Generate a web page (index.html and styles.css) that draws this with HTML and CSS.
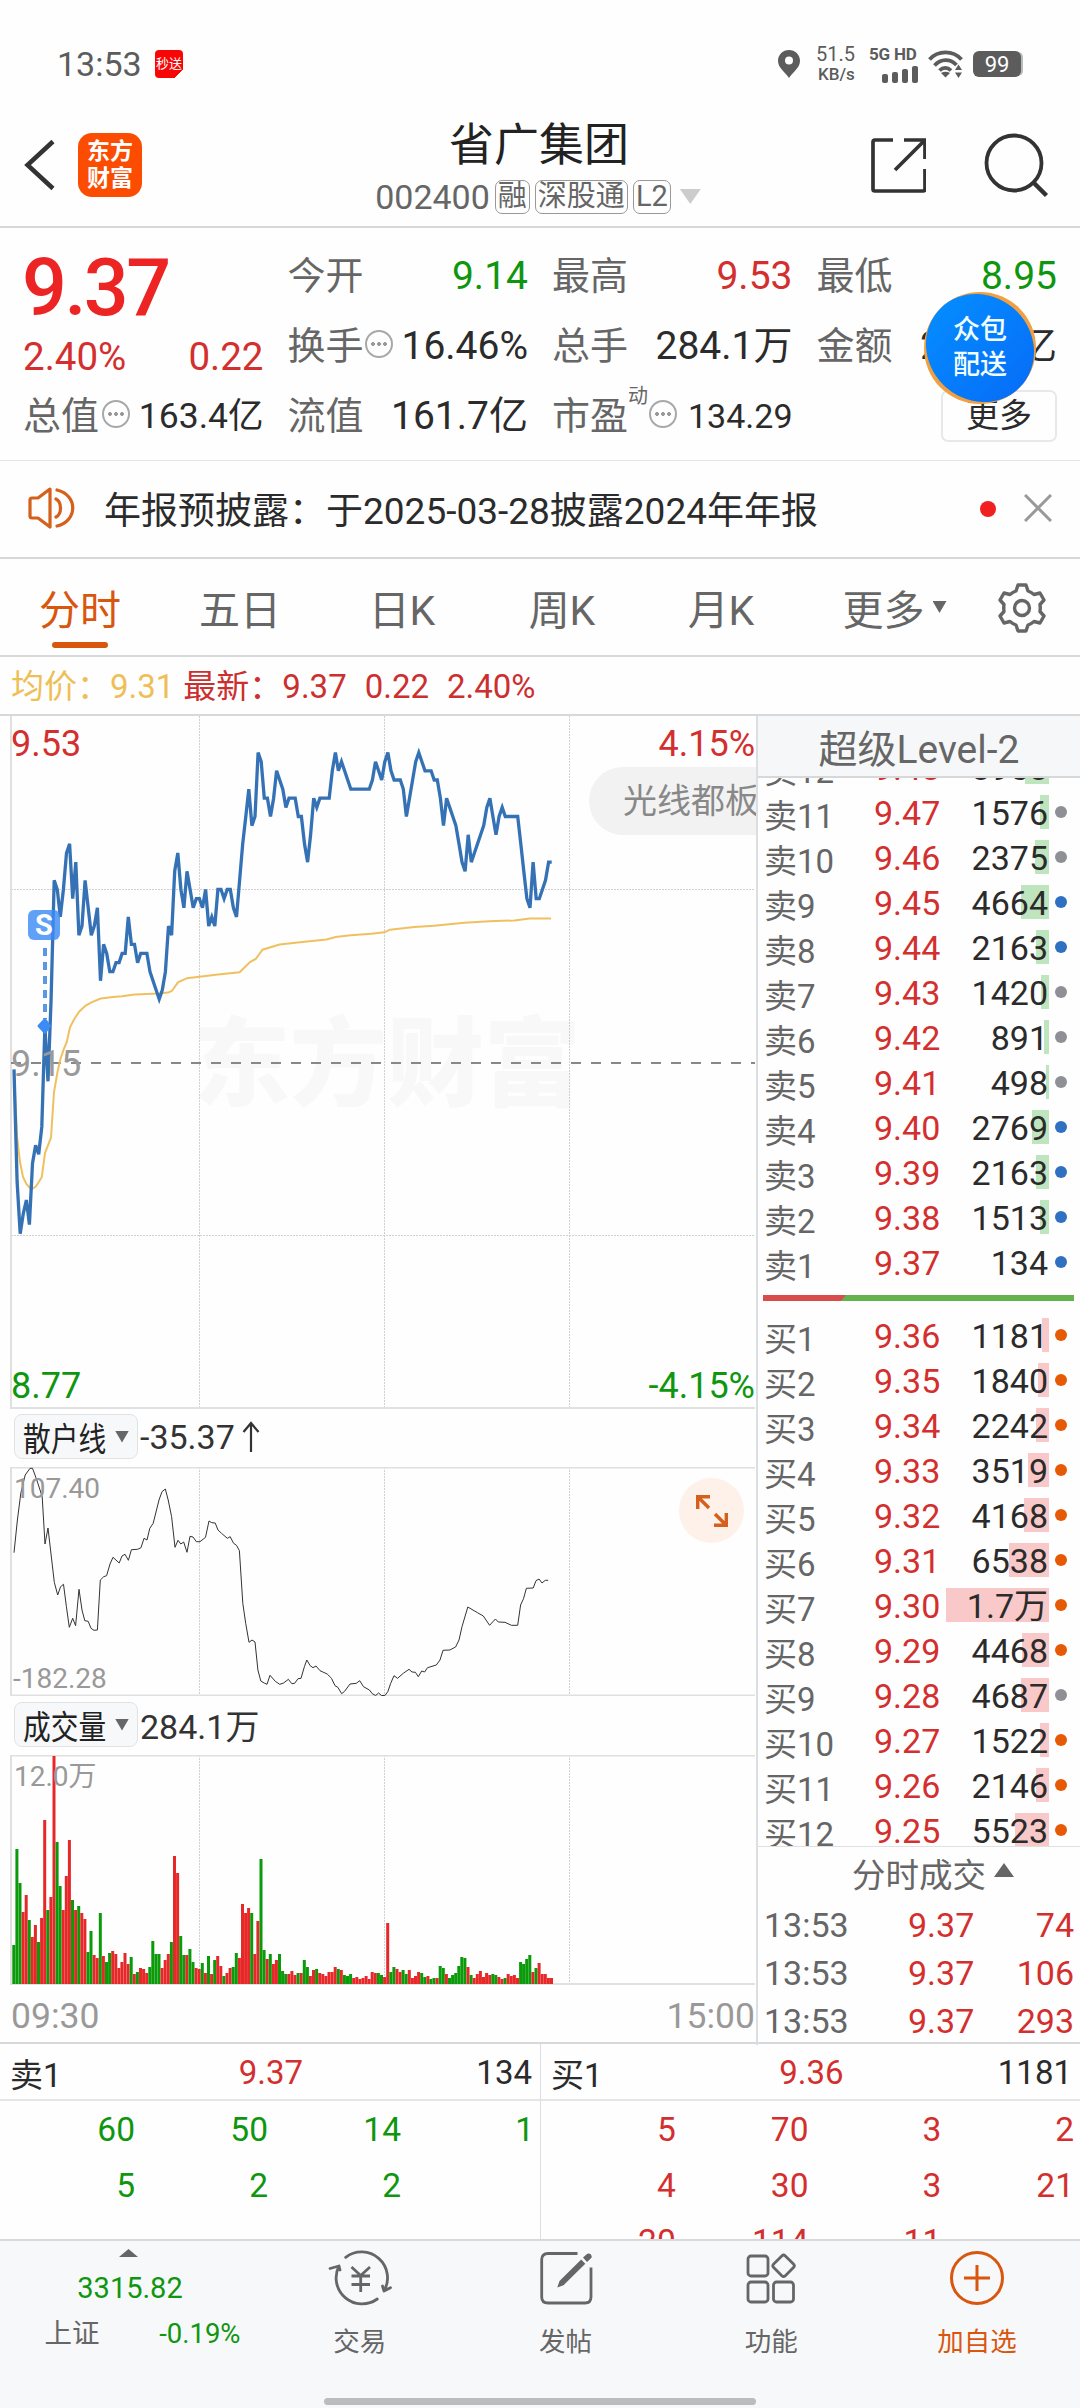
FILE: index.html
```html
<!DOCTYPE html>
<html lang="zh-CN">
<head>
  <meta charset="UTF-8" />
  <meta name="viewport" content="width=device-width, initial-scale=1.0" />
  <title>省广集团 002400</title>
  <link rel="stylesheet" href="styles.css">
</head>
<body>
  <div class="phone">
    <div class="status-bar">
      <span class="clock">13:53</span>
      <span class="app-badge">秒送</span>
      <div class="status-icons">
        <svg class="pin" width="22" height="28" viewBox="0 0 22 28"><path d="M11 0C5 0 0 4.700 0 10.800C0 18 7 22 11 28C15 22 22 18 22 10.800C22 4.700 17 0 11 0ZM11 6.500A4 4 0 1 1 11 14.500A4 4 0 0 1 11 6.500Z" fill="#5c5c5c" fill-rule="evenodd"/></svg>
        <div class="net-speed"><span>51.5</span><span>KB/s</span></div>
        <div class="signal">
          <span>5G HD</span>
          <svg width="36" height="17" viewBox="0 0 36 17" fill="#5c5c5c"><rect x="0" y="8" width="6" height="9" rx="2"/><rect x="10" y="6" width="6" height="11" rx="2"/><rect x="20" y="3" width="6" height="14" rx="2"/><rect x="30" y="0" width="6" height="17" rx="2"/></svg>
        </div>
        <svg class="wifi" width="36" height="28" viewBox="0 0 36 28" fill="none" stroke="#5c5c5c" stroke-width="3.800"><path d="M1.500 9.500C10 0 25 0 33.500 9.500"/><path d="M6.500 15.500C13 8.500 22 8.500 28.500 15"/><path d="M11.500 20.500C15 17 19.500 17 23 20.500"/><path d="M13 23L17.500 27.500L22 23Q17.500 20.500 13 23Z" fill="#5c5c5c" stroke="none"/><path d="M27 20L30.500 14.500L34 20ZM27 22.500L30.500 28L34 22.500Z" fill="#5c5c5c" stroke="none"/></svg>
        <div class="battery">99</div>
      </div>
    </div>

    <header class="header">
      <svg class="back" width="32" height="52" viewBox="0 0 32 52" fill="none" stroke="#333" stroke-width="4.500"><path d="M29 2.500L3.500 26L29 49.500"/></svg>
      <div class="logo"><span>东方</span><span>财富</span></div>
      <div class="title">
        <h1>省广集团</h1>
        <div class="code">
          <span>002400</span>
          <span class="tag">融</span>
          <span class="tag">深股通</span>
          <span class="tag">L2</span>
          <i class="caret"></i>
        </div>
      </div>
      <svg class="share" width="56" height="56" viewBox="0 0 56 56" fill="none" stroke="#333" stroke-width="3.700"><path d="M23 3H5Q3 3 3 5V52Q3 54 5 54H53Q55 54 55 52V32"/><path d="M34 3H55V22M54 4L25 33"/></svg>
      <svg class="search" width="66" height="66" viewBox="0 0 66 66" fill="none" stroke="#333" stroke-width="3.800"><circle cx="30" cy="31" r="27.500"/><path d="M49.500 50.500L62.500 63.500" stroke-width="4.500"/></svg>
    </header>

    <section class="quote">
      <div class="price-cell">
        <b>9.37</b>
        <div class="change"><span>2.40%</span><span>0.22</span></div>
      </div>
      <div class="cell"><label>今开</label><span class="green">9.14</span></div>
      <div class="cell"><label>最高</label><span class="red">9.53</span></div>
      <div class="cell"><label>最低</label><span class="green">8.95</span></div>
      <div class="cell"><label>换手</label><i class="more-dot"></i><span>16.46%</span></div>
      <div class="cell"><label>总手</label><span>284.1万</span></div>
      <div class="cell"><label>金额</label><span>26.45亿</span></div>
      <div class="cell"><label>总值</label><i class="more-dot gap"></i><span class="small">163.4亿</span></div>
      <div class="cell"><label>流值</label><span>161.7亿</span></div>
      <div class="cell"><label>市盈</label><sup>动</sup><i class="more-dot"></i><span class="mid">134.29</span></div>
      <div class="cell"><button class="more-btn">更多</button></div>
      <div class="float-badge"><span>众包</span><span>配送</span></div>
    </section>

    <section class="notice">
      <svg width="48" height="42" viewBox="0 0 48 42" fill="none" stroke="#d4601c" stroke-width="3.200" stroke-linejoin="round"><path d="M22 2L10 11H4Q2 11 2 13V29Q2 31 4 31H10L22 40Z"/><path d="M28 12C34 15 34 27 28 30" stroke-linecap="round"/><path d="M29 3C50 8 50 34 29 39" stroke-linecap="round"/></svg>
      <p>年报预披露：于2025-03-28披露2024年年报</p>
      <i class="red-dot"></i>
      <svg width="28" height="28" viewBox="0 0 28 28" stroke="#999" stroke-width="3"><path d="M1 1L27 27M27 1L1 27"/></svg>
    </section>

    <nav class="tabs">
      <a class="active">分时</a>
      <a>五日</a>
      <a>日K</a>
      <a>周K</a>
      <a>月K</a>
      <a class="tab-more">更多<i class="caret"></i></a>
      <a><svg width="48" height="50" viewBox="0 0 48 50" fill="none" stroke="#666" stroke-width="3.400" stroke-linejoin="round"><path d="M20 2H28L30 8Q33 9 36 11.500L42 10L46 17L42 21.500Q42.500 25 42 28.500L46 33L42 40L36 38.500Q33 41 30 42L28 48H20L18 42Q15 41 12 38.500L6 40L2 33L6 28.500Q5.500 25 6 21.500L2 17L6 10L12 11.500Q15 9 18 8Z"/><circle cx="24" cy="25" r="7.500"/></svg></a>
    </nav>

    <div class="latest">
      <span class="avg">均价：9.31</span>
      <span>最新：9.37</span>
      <span>0.22</span>
      <span>2.40%</span>
    </div>

    <main class="main">
      <div class="charts">
        <svg class="chart" width="756" height="693" viewBox="0 0 756 693">
          <text class="watermark" x="193" y="382">东方财富</text>
          <g class="grid">
            <path d="M199.500 0V692M384.500 0V692M569.500 0V692M11 173.500H755M11 519.500H755"/>
          </g>
          <path class="frame" d="M11 0V692H755"/>
          <path d="M11 347H755" stroke="#888" stroke-width="2" stroke-dasharray="10 10"/>
          <text class="label red" x="11" y="40">9.53</text>
          <text class="label red end" x="755" y="40">4.15%</text>
          <text class="label green" x="11" y="682">8.77</text>
          <text class="label green end" x="755" y="682">-4.15%</text>
          <polyline class="avg-line" points="14,354 17,420 20,446 23,461 26.400,468 31.400,473.500 35.700,470.500 39,465.700 41.800,461 45,437 51,421.700 54,376 57.500,356 60.400,343 63.600,333.600 66.800,326 70,311.400 74.300,303 79.300,295.500 85.700,289.600 91.400,286.300 100.700,282.600 113,281 122,280.300 134.600,278.500 159.300,277.400 168,276.600 171.800,275 178,266.300 187,262.200 199.300,260.700 218,258.500 239.600,256.300 250,246 255.700,243 262.500,233.700 279.600,228.500 300,226.300 326.400,223.400 335.700,221 350.700,219.300 371.400,217.800 384.300,216.300 390,213.700 414.300,211 434,209.700 464.300,206.700 489.300,205.200 514.300,204.500 529.600,202.600 551,202.600"/>
          <polyline class="price-line" id="priceLine"/>
          <text class="label gray" x="11" y="360">9.15</text>
          <path d="M45 232V303" stroke="#5a98e2" stroke-width="4" stroke-dasharray="8 6"/>
          <path d="M45 303L50 310L45 317L38.500 310Z" fill="#3d8bf5" stroke="#3d8bf5" stroke-width="2" stroke-linejoin="round"/>
          <rect x="28" y="194" width="32" height="30" rx="6" fill="#3d8bf5" fill-opacity="0.820"/>
          <text class="sell-mark" x="44" y="219">S</text>
          <path d="M756 51H623A34 34 0 0 0 623 119H756Z" fill="#f2f2f2"/>
          <text class="topic" x="623" y="97">光线都板块</text>
        </svg>

        <div class="indicator">
          <div class="picker"><span>散户线</span><i class="caret"></i></div>
          <span>-35.37</span>
          <svg width="18" height="32" viewBox="0 0 18 32" fill="none" stroke="#333" stroke-width="2.200"><path d="M9 31V2M1.500 11L9 2L16.500 11"/></svg>
        </div>
        <div class="sub-chart">
          <svg width="756" height="229" viewBox="0 0 756 229">
            <path class="grid" d="M199.500 0V229M384.500 0V229M569.500 0V229"/>
            <path class="frame" d="M755 0.500H11V228.500H755"/>
            <polyline class="retail-line" points="14,85.700 17.400,53 20.800,26.300 25.200,8 30,1.300 32.500,1.300 36.800,13 42.200,29.700 45,77 48,61 54.300,115.300 57.700,128 60.600,119.700 63.500,117.300 66.400,139.700 69.300,160.300 72.700,151.300 75.600,158.700 79,122.300 82,143 84.800,153.700 88.200,154.300 91,161.300 94,163.300 97.400,163 100.300,113 103.700,109.700 106.600,108.700 110,97 113,90.300 119.200,96 122,89 125,87.300 128.400,93.300 131.400,82.700 137.700,82.300 141,80.700 144,71.300 147,73 149.800,61.300 153.200,56.300 159,33 162,24.700 165.300,22 168.200,33 171.600,49.700 175,80.300 178,73.300 180.800,77 183.700,75 187,85.300 190,69.300 193,70 196.300,74.700 200,74.700 205.500,70.300 209,54 211.800,55.700 215.200,56 218,63 221.500,66.300 227.300,71.300 230.200,69.700 233.600,76.300 236.500,78.300 239.400,83.700 242.800,136.300 245.700,156.300 249,175.300 252,173 255,175 257.900,203 260.800,214 264.200,216 267,217.300 270,208.300 275.300,214.300 279.700,217.300 283.600,216 288.400,212.300 291.800,216.700 294.700,216.300 298,211.700 301,211.300 304.400,199.700 306.800,193 310.200,198.700 313,200.700 316,199 320,203.700 327.200,207 331.500,211.300 335,218.700 337.800,220.300 341.700,226.700 344.600,224.300 350,217 356.300,216.300 359.700,213.700 363.500,219.700 369.400,223 372.300,226.700 375.700,228.500 378.600,226 381.500,228.500 384.900,228.500 387.800,224.700 390.700,216.300 394,208.700 397.500,211.300 403.300,206.300 409,202.300 412,205 415.400,205.300 418.300,209.700 421.700,204 424.600,205 427.500,200.700 436.300,198 440,193 443,183.300 449.800,183 455.600,180 459,173 462,159.700 467.800,140 477.500,145.700 483.300,149 489.600,158.300 495.400,152 498.300,155 505,155.300 511.400,158.300 517.700,158.300 520.600,138 523.500,131.700 526.400,121.300 533.200,121 536,113.700 539,112 542,116 545.300,113.300 548.200,113.300"/>
            <text class="small-label" x="14" y="31">107.40</text>
            <text class="small-label" x="13" y="221">-182.28</text>
          </svg>
          <button class="expand"><svg width="32" height="32" viewBox="0 0 32 32" fill="none" stroke="#d4601c" stroke-width="3.400"><path d="M1.700 14V1.700H14M1.700 1.700L13 13M18 30.300H30.300V18M30.300 30.300L19 19"/></svg></button>
        </div>

        <div class="indicator">
          <div class="picker"><span>成交量</span><i class="caret"></i></div>
          <span>284.1万</span>
        </div>
        <svg class="chart" width="756" height="230" viewBox="0 0 756 230">
          <path class="grid" d="M199.500 0V229M384.500 0V229M569.500 0V229"/>
          <path class="frame" d="M755 0.500H11V229H755"/>
          <g id="volumeBars"></g>
          <text class="small-label" x="14" y="31">12.0万</text>
        </svg>
        <div class="times"><span>09:30</span><span>15:00</span></div>
      </div>

      <aside class="depth">
        <h2>超级Level-2</h2>
        <div class="book">
          <div class="rows" id="sellRows"></div>
          <div class="ratio"><i></i></div>
          <div class="rows" id="buyRows"></div>
        </div>
        <div class="deals">
          <div class="deals-title">分时成交<i class="caret up"></i></div>
          <div class="deal"><span>13:53</span><b>9.37</b><em>74</em></div>
          <div class="deal"><span>13:53</span><b>9.37</b><em>106</em></div>
          <div class="deal"><span>13:53</span><b>9.37</b><em>293</em></div>
        </div>
      </aside>
    </main>

    <section class="queues">
      <div class="queue">
        <div class="queue-head"><span>卖1</span><b>9.37</b><span>134</span></div>
        <div class="orders green"><span>60</span><span>50</span><span>14</span><span>1</span><span>5</span><span>2</span><span>2</span></div>
      </div>
      <div class="queue">
        <div class="queue-head"><span>买1</span><b>9.36</b><span>1181</span></div>
        <div class="orders red"><span>5</span><span>70</span><span>3</span><span>2</span><span>4</span><span>30</span><span>3</span><span>21</span><span>20</span><span>114</span><span>11</span></div>
      </div>
    </section>

    <footer class="toolbar">
      <div class="index">
        <i class="caret up"></i>
        <b>3315.82</b>
        <div><span>上证</span><em>-0.19%</em></div>
      </div>
      <div class="tool">
        <svg width="64" height="56" viewBox="0 0 64 56" fill="none" stroke="#666" stroke-width="2.800" stroke-linecap="round" stroke-linejoin="round"><path d="M17.700 7.300A26 26 0 0 1 56 41L62.500 37.700M56 41L54.500 36"/><path d="M49.300 49A26 26 0 0 1 11 16L2 18.500M11 16L12 20"/><path d="M23.500 17L32.700 25.500L42 17M32.700 25.500V42M23.500 26H42M23.500 34.500H42" stroke-linecap="butt"/></svg>
        <span>交易</span>
      </div>
      <div class="tool">
        <svg width="54" height="56" viewBox="0 0 54 56" fill="none" stroke="#666" stroke-width="2.800"><path d="M38.500 3.500H9Q2.700 3.500 2.700 9.500V47Q2.700 53 9 53H46Q52 53 52 47V17.500"/><path d="M18.300 37.500L20.500 31L42.200 9.500L46.300 13.700L24.500 35.200ZM44 7.500L48 3.900Q50 2.800 52 4.500Q53.500 6.500 51.800 8.500L48 12Z" fill="#666" stroke="none"/></svg>
        <span>发帖</span>
      </div>
      <div class="tool">
        <svg width="52" height="56" viewBox="0 0 52 56" fill="none" stroke="#666" stroke-width="2.800"><rect x="3" y="6" width="20" height="20" rx="3"/><rect x="3" y="32" width="20" height="20" rx="3"/><rect x="28.500" y="32" width="20" height="20" rx="3"/><rect x="30.300" y="7.500" width="16.500" height="16.500" rx="2.500" transform="rotate(45 38.500 15.800)"/></svg>
        <span>功能</span>
      </div>
      <div class="tool add">
        <svg width="56" height="56" viewBox="0 0 56 56" fill="none" stroke="#d9560f" stroke-width="3"><circle cx="28" cy="28" r="25.500"/><path d="M28 15V41M15 28H41"/></svg>
        <span>加自选</span>
      </div>
      <i class="home-bar"></i>
    </footer>
  </div>

  <script>
    // one value per minute from 09:30
    const prices = [
      9.143, 9.02, 8.963, 8.985, 9.00, 8.973, 9.04, 9.06, 9.05, 9.08, 9.19, 9.13, 9.22, 9.35, 9.34, 9.31, 9.34, 9.38, 9.39, 9.33,
      9.37, 9.29, 9.30, 9.35, 9.32, 9.29, 9.30, 9.32, 9.24, 9.28, 9.27, 9.25, 9.25, 9.26, 9.26, 9.27, 9.27, 9.31, 9.28, 9.28,
      9.26, 9.27, 9.27, 9.27, 9.25, 9.24, 9.23, 9.22, 9.23, 9.25, 9.30, 9.29, 9.36, 9.38, 9.34, 9.32, 9.36, 9.34, 9.32, 9.33,
      9.33, 9.32, 9.34, 9.30, 9.31, 9.30, 9.34, 9.34, 9.33, 9.34, 9.34, 9.32, 9.31, 9.35, 9.39, 9.42, 9.45, 9.41, 9.42, 9.49,
      9.48, 9.44, 9.44, 9.42, 9.44, 9.47, 9.46, 9.45, 9.43, 9.44, 9.44, 9.44, 9.42, 9.42, 9.39, 9.37, 9.40, 9.44, 9.43, 9.44,
      9.44, 9.44, 9.44, 9.47, 9.49, 9.47, 9.48, 9.47, 9.46, 9.45, 9.45, 9.45, 9.45, 9.45, 9.45, 9.45, 9.46, 9.48, 9.47, 9.46,
      9.48, 9.49, 9.47, 9.46, 9.46, 9.46, 9.45, 9.42, 9.44, 9.46, 9.48, 9.49, 9.48, 9.47, 9.47, 9.47, 9.46, 9.46, 9.44, 9.41,
      9.44, 9.43, 9.42, 9.41, 9.39, 9.37, 9.36, 9.40, 9.37, 9.38, 9.39, 9.40, 9.41, 9.43, 9.44, 9.42, 9.40, 9.42, 9.43, 9.42,
      9.42, 9.42, 9.42, 9.42, 9.39, 9.36, 9.33, 9.32, 9.37, 9.33, 9.33, 9.34, 9.35, 9.37, 9.37
    ];
    const step = 3.09;
    document.getElementById('priceLine').setAttribute('points',
      prices.map((p, i) => `${(14 + i * step).toFixed(1)},${(347 - (p - 9.15) * 913).toFixed(1)}`).join(' '));

    // g = down minute, r = up minute
    const volumes = ('g39 g135 g101 r72 r89 g64 r47 r59 g42 r66 r164 g74 r87 r228 g142 g98 r74 r108 r144 g84 ' +
      'r74 g78 r71 r65 g32 g53 r29 r26 g71 r28 g22 g31 r33 r30 r16 r22 r31 r20 g27 r10 ' +
      'g12 r16 r15 r11 g17 g43 g30 g30 r16 r24 r30 g42 r128 r111 g48 g29 r29 g35 g22 r16 ' +
      'r15 g21 r11 g28 r10 g24 r28 r18 g8 r11 r16 g17 g31 r26 r80 r71 r76 g71 r30 r63 ' +
      'g125 g34 r25 g30 r20 r24 g30 g13 g10 r10 r13 r9 g11 r11 g24 g17 r8 r14 g15 r11 ' +
      'r10 r8 r12 r12 r17 g15 r14 g9 g8 g10 r6 r7 r5 r6 r8 r5 r12 r11 g11 g9 ' +
      'r7 r61 g12 g17 r15 r12 g14 g10 r14 r6 r8 r12 g11 g7 r8 g5 g6 r6 g18 g16 ' +
      'r10 g6 g9 g11 g18 g27 g26 r17 g9 r6 r10 r13 r7 r11 r9 g10 g9 r7 r5 g6 ' +
      'r10 r8 r9 r6 g22 g20 g25 g29 r12 g16 r21 r10 r10 r6 r6').split(' ');
    document.getElementById('volumeBars').innerHTML = volumes.map((v, i) => {
      const h = Number(v.slice(1));
      return `<rect x="${(12.3 + i * step).toFixed(1)}" y="${229 - h}" width="3" height="${h}" fill="${v[0] === 'g' ? '#0a9a0a' : '#e62828'}"/>`;
    }).join('');

    // level, price, volume, bar width, dot colour
    const sells = [
      ['卖12', '9.48', '3958', 24, 'grey'], ['卖11', '9.47', '1576', 9, 'grey'], ['卖10', '9.46', '2375', 14, 'grey'],
      ['卖9', '9.45', '4664', 28, 'blue'], ['卖8', '9.44', '2163', 13, 'blue'], ['卖7', '9.43', '1420', 8, 'grey'],
      ['卖6', '9.42', '891', 5, 'grey'], ['卖5', '9.41', '498', 3, 'grey'], ['卖4', '9.40', '2769', 17, 'blue'],
      ['卖3', '9.39', '2163', 13, 'blue'], ['卖2', '9.38', '1513', 9, 'blue'], ['卖1', '9.37', '134', 0, 'blue']
    ];
    const buys = [
      ['买1', '9.36', '1181', 7, 'orange'], ['买2', '9.35', '1840', 11, 'orange'], ['买3', '9.34', '2242', 13, 'orange'],
      ['买4', '9.33', '3519', 21, 'orange'], ['买5', '9.32', '4168', 25, 'orange'], ['买6', '9.31', '6538', 40, 'orange'],
      ['买7', '9.30', '1.7万', 103, 'orange'], ['买8', '9.29', '4468', 27, 'orange'], ['买9', '9.28', '4687', 28, 'grey'],
      ['买10', '9.27', '1522', 9, 'orange'], ['买11', '9.26', '2146', 13, 'orange'], ['买12', '9.25', '5523', 34, 'orange']
    ];
    function renderRows(id, rows, side) {
      document.getElementById(id).innerHTML = rows.map(([level, price, vol, width, dot]) => `<div class="row">
        <span class="level">${level}</span>
        <span class="row-price">${price}</span>
        <span class="vol"><i class="vol-bar ${side}" style="width:${width}px"></i><span>${vol}</span></span>
        <i class="dot ${dot}"></i>
      </div>`).join('');
    }
    renderRows('sellRows', sells, 'sell');
    renderRows('buyRows', buys, 'buy');
  </script>
</body>
</html>
```
FILE: styles.css
```css
* {
  box-sizing: border-box;
}
body {
  margin: 0;
  background: #fefefe;
  font-family: Roboto, "Noto Sans CJK SC", sans-serif;
  color: #2b2b2b;
}
.phone {
  width: 1080px;
  height: 2408px;
  overflow: hidden;
  display: flex;
  flex-direction: column;
}
h1, h2, p {
  margin: 0;
  font-weight: 400;
}
b, em, i {
  font-weight: 400;
  font-style: normal;
}
svg {
  display: block;
  flex: none;
}
.red {
  color: #d32f2f;
  fill: #d32f2f;
}
.green {
  color: #0f960f;
  fill: #0f960f;
}
.gray {
  fill: #999;
}
.caret {
  display: inline-block;
  width: 14px;
  height: 12px;
  background: #666;
  clip-path: polygon(0 0, 100% 0, 50% 100%);
}
.caret.up {
  clip-path: polygon(50% 0, 100% 100%, 0 100%);
}

/* status bar */
.status-bar {
  height: 100px;
  padding: 28px 59px 0 57px;
  display: flex;
  align-items: center;
  color: #5c5c5c;
  line-height: 1;
}
.clock {
  font-size: 34px;
  width: 98px;
}
.app-badge {
  width: 28px;
  height: 28px;
  border-radius: 4px;
  background: linear-gradient(135deg, #f80606 84%, #fff 84%);
  color: #fff;
  font-size: 13px;
  line-height: 27px;
  text-align: center;
}
.status-icons {
  margin-left: auto;
  display: flex;
  align-items: center;
}
.net-speed {
  width: 53px;
  margin-left: 16px;
  display: flex;
  flex-direction: column;
  gap: 2px;
  font-size: 20px;
  line-height: 18px;
}
.net-speed span:last-child {
  font-size: 17px;
  font-weight: 500;
  padding-left: 2px;
}
.signal {
  width: 59px;
  display: flex;
  flex-direction: column;
  gap: 4px;
  font-size: 17px;
  font-weight: 700;
  line-height: 16px;
}
.signal span {
  white-space: nowrap;
  letter-spacing: -0.2px;
}
.signal svg {
  margin-left: 13px;
}
.battery {
  width: 48px;
  height: 26px;
  margin-left: 9px;
  border-radius: 6px;
  background: #5c5c5c;
  color: #fff;
  font-size: 22px;
  line-height: 27px;
  text-align: center;
  box-shadow: 3px 0 0 -1px #bbb;
}

/* header */
.header {
  height: 128px;
  padding: 3px 30px 0 24px;
  display: grid;
  grid-template-columns: 54px 66px 1fr 114px 66px;
  align-items: center;
  border-bottom: 2px solid #d6d8da;
}
.logo {
  width: 64px;
  height: 64px;
  border-radius: 14px;
  background: #fc4c02;
  color: #fff;
  font-size: 23px;
  font-weight: 700;
  line-height: 27px;
  display: flex;
  flex-direction: column;
  align-items: center;
  justify-content: center;
}
.title {
  text-align: center;
  padding-top: 4px;
  padding-left: 48px;
}
.title h1 {
  font-size: 45px;
  line-height: 60px;
  color: #222;
  padding-left: 16px;
}
.code {
  display: flex;
  justify-content: center;
  align-items: center;
  gap: 5px;
  height: 42px;
  padding-left: 14px;
  font-size: 34px;
  color: #666;
}
.tag {
  height: 34px;
  padding: 0 2px;
  border: 1.5px solid #999;
  border-radius: 7px;
  font-size: 29px;
  line-height: 31px;
}
.code .caret {
  width: 21px;
  height: 15px;
  margin-left: 4px;
  background: #ccc;
}

/* quote */
.quote {
  position: relative;
  height: 233px;
  padding: 13px 23px 0;
  display: grid;
  grid-template-columns: repeat(4, 1fr);
  grid-template-rows: repeat(3, 70px);
  column-gap: 24px;
  border-bottom: 1px solid #e3e5e7;
}
.price-cell {
  grid-row: span 2;
}
.price-cell b {
  display: block;
  font-size: 79px;
  font-weight: 500;
  line-height: 96px;
  margin-top: -1px;
  margin-left: -1px;
  letter-spacing: -2.500px;
  color: #ed2424;
}
.change {
  display: flex;
  justify-content: space-between;
  margin-top: -3px;
  font-size: 38.500px;
  line-height: 48px;
  color: #d32f2f;
}
.cell {
  display: flex;
  align-items: center;
  font-size: 38px;
  line-height: 70px;
  white-space: nowrap;
}
.cell label {
  color: #666;
}
.cell span {
  margin-left: auto;
  font-size: 39px;
}
.cell .small {
  font-size: 35.500px;
}
.cell .mid {
  font-size: 34px;
}
.cell sup {
  font-size: 20px;
  line-height: 20px;
  color: #666;
  align-self: flex-start;
  margin-top: 5px;
}
.more-dot {
  width: 28px;
  height: 28px;
  margin-left: 1px;
  margin-top: -4px;
  border: 2px solid #a8a8a8;
  border-radius: 50%;
  background: radial-gradient(circle, #999 1.6px, transparent 2.2px) center / 6px 24px repeat-x content-box;
  padding: 0 3px;
}
.more-dot.gap {
  margin-left: 3px;
}
.more-btn {
  width: 116px;
  height: 52px;
  margin-left: auto;
  border: 2px solid #e6e8ea;
  border-radius: 7px;
  background: #fefefe;
  font: inherit;
  font-size: 33px;
  line-height: 46px;
  color: #2b2b2b;
  padding: 0;
}
.float-badge {
  position: absolute;
  left: 924px;
  top: 64px;
  width: 112px;
  height: 112px;
  border-radius: 50%;
  background: #f0a040;
  color: #f0fdff;
  font-size: 27px;
  font-weight: 500;
  line-height: 35px;
  display: flex;
  flex-direction: column;
  align-items: center;
  justify-content: center;
}
.float-badge::before {
  content: "";
  position: absolute;
  left: 0;
  top: 4px;
  width: 112px;
  height: 104px;
  border-radius: 50%;
  background: linear-gradient(90deg, #058aff, #0670f8);
  transform: rotate(45deg);
}
.float-badge span {
  position: relative;
}

/* notice */
.notice {
  height: 98px;
  padding: 0 28px 2px;
  display: flex;
  align-items: center;
  border-bottom: 2px solid #d6d8da;
}
.notice p {
  margin-left: 28px;
  margin-top: -1px;
  font-size: 37px;
}
.red-dot {
  width: 16px;
  height: 16px;
  margin: 2px 28px 0 auto;
  border-radius: 50%;
  background: #f02020;
}

/* tabs */
.tabs {
  height: 98px;
  display: grid;
  grid-template-columns: 160px 160px 164px 156px 162px 185px 1fr;
  border-bottom: 2px solid #d6d8da;
}
.tabs a {
  display: flex;
  align-items: center;
  justify-content: center;
  position: relative;
  font-size: 41px;
  color: #666;
}
.tabs .active {
  color: #d9560f;
}
.tabs .active::after {
  content: "";
  position: absolute;
  left: 52px;
  bottom: 7px;
  width: 56px;
  height: 6px;
  border-radius: 3px;
  background: #d9560f;
}
.tabs a:last-child {
  padding-right: 24px;
  padding-top: 1px;
}
.tab-more .caret {
  margin-left: 8px;
}

.latest {
  height: 59px;
  padding-left: 11px;
  display: flex;
  align-items: baseline;
  gap: 18px;
  font-size: 33px;
  line-height: 59px;
  color: #cc2f2f;
  border-bottom: 2px solid #d6d8da;
}
.avg {
  color: #efbf57;
  margin-right: -9px;
}

/* charts */
.main {
  height: 1328px;
  display: grid;
  grid-template-columns: 756px 1fr;
  border-bottom: 2px solid #d6d8da;
}
.grid {
  fill: none;
  stroke: #d0d0d0;
  stroke-width: 1;
  stroke-dasharray: 2 1;
}
.frame {
  fill: none;
  stroke: #e0e0e0;
  stroke-width: 2;
}
.avg-line {
  fill: none;
  stroke: #f0c060;
  stroke-width: 2;
}
.price-line {
  fill: none;
  stroke: #3572b5;
  stroke-width: 3.3;
}
.retail-line {
  fill: none;
  stroke: #333;
  stroke-width: 1;
}
.label {
  font-size: 36px;
}
.end {
  text-anchor: end;
}
.watermark {
  font-size: 97px;
  font-weight: 900;
  fill: #f8f8f8;
}
.sell-mark {
  font-size: 29px;
  font-weight: 700;
  fill: #fff;
  text-anchor: middle;
}
.topic {
  font-size: 34px;
  fill: #888;
}
.small-label {
  font-size: 28px;
  fill: #999;
}
.indicator {
  height: 58px;
  padding: 0 0 3px 14px;
  display: flex;
  align-items: center;
  font-size: 34px;
  color: #333;
}
.picker {
  width: 124px;
  height: 45px;
  margin-right: 2px;
  padding-left: 8px;
  display: flex;
  align-items: center;
  border: 1.5px solid #e0e3e6;
  border-radius: 8px;
  background: #f7f8fa;
  color: #222;
}
.picker span {
  width: 92px;
  font-size: 33px;
  transform: scaleX(0.84);
  transform-origin: left;
  white-space: nowrap;
}
.indicator svg {
  margin-left: 7px;
}
.sub-chart {
  position: relative;
  height: 230px;
}
.expand {
  position: absolute;
  right: 12px;
  top: 11px;
  width: 65px;
  height: 65px;
  padding: 0 0 0 1px;
  border: 0;
  border-radius: 50%;
  background: #fdf1ea;
  display: flex;
  align-items: center;
  justify-content: center;
}
.times {
  height: 59px;
  padding: 3px 1px 0 11px;
  display: flex;
  justify-content: space-between;
  align-items: center;
  font-size: 35.500px;
  color: #999;
}

/* level-2 */
.depth {
  border-left: 2px solid #dcdfe2;
  min-width: 0;
}
.depth h2 {
  height: 62px;
  background: #f6f7f9;
  border-bottom: 2px solid #d6d8da;
  font-size: 39px;
  line-height: 69px;
  text-align: center;
  color: #666;
}
.book {
  height: 1069px;
  overflow: hidden;
  border-bottom: 1px solid #e0e0e0;
}
#sellRows {
  margin-top: -34.500px;
}
.row {
  height: 45px;
  padding-left: 6px;
  display: grid;
  grid-template-columns: 110px 70px 105px 12px;
  align-items: center;
  line-height: 45px;
  font-size: 34px;
}
.level {
  font-size: 33px;
  color: #666;
  padding-top: 5px;
}
.row-price {
  color: #d32f2f;
}
.vol {
  position: relative;
  display: block;
  height: 45px;
  text-align: right;
  padding-right: 1px;
}
.vol span {
  position: relative;
}
.vol-bar {
  position: absolute;
  right: 0;
  top: 4px;
  height: 34px;
}
.vol-bar.sell {
  background: #bfe5bf;
}
.vol-bar.buy {
  background: #f9c8c8;
}
.dot {
  width: 12px;
  height: 12px;
  margin: -3px 0 0 6px;
  border-radius: 50%;
}
.grey {
  background: #8f8f96;
}
.blue {
  background: #2f70c0;
}
.orange {
  background: #e65a05;
}
.ratio {
  height: 6px;
  margin: 11.500px 6px 10.500px 5px;
  background: #62b34b;
}
.ratio i {
  display: block;
  width: 83px;
  height: 6px;
  background: #d94c4c;
  clip-path: polygon(0 0, 100% 0, 78px 100%, 0 100%);
}
.deals-title {
  height: 54px;
  display: flex;
  align-items: center;
  justify-content: center;
  font-size: 33.500px;
  padding-left: 28px;
  padding-bottom: 4px;
  color: #666;
}
.deals-title .caret {
  width: 20px;
  height: 14px;
  margin: -4px 0 0 8px;
}
.deal {
  height: 48px;
  padding: 0 6px;
  display: grid;
  grid-template-columns: 144px 80px 1fr;
  align-items: center;
  font-size: 34px;
  color: #666;
}
.deal b, .deal em {
  color: #d32f2f;
}
.deal em {
  text-align: right;
}

/* order queues */
.queues {
  height: 197px;
  display: grid;
  grid-template-columns: 1fr 1fr;
  border-bottom: 2px solid #d6d8da;
  overflow: hidden;
}
.queue + .queue {
  border-left: 1px solid #dcdfe2;
}
.queue-head {
  height: 57px;
  padding: 2px 8px 0 10px;
  display: grid;
  grid-template-columns: 1fr 1fr 1fr;
  align-items: center;
  font-size: 33px;
  border-bottom: 2px solid #e3e5e7;
}
.queue-head b {
  color: #d32f2f;
  text-align: center;
}
.queue-head span:last-child {
  text-align: right;
}
.orders {
  padding: 0 6px 0 2px;
  display: grid;
  grid-template-columns: repeat(4, 1fr);
  grid-auto-rows: 56px;
  align-items: center;
  text-align: right;
  font-size: 33.500px;
}

/* bottom toolbar */
.toolbar {
  position: relative;
  flex: 1;
  display: grid;
  grid-template-columns: 257px repeat(4, 205.700px);
  background: #f7f8fa;
  color: #666;
}
.index {
  display: flex;
  flex-direction: column;
  align-items: center;
  padding-top: 8px;
  line-height: 1;
}
.index .caret {
  width: 19px;
  height: 8px;
}
.index b {
  font-size: 29px;
  margin-top: 17px;
  margin-left: 3px;
  color: #0f960f;
}
.index div {
  width: 196px;
  margin-top: 15px;
  margin-left: 28px;
  display: flex;
  justify-content: space-between;
  font-size: 27.500px;
  line-height: 32px;
}
.index em {
  color: #0f960f;
}
.tool {
  display: flex;
  flex-direction: column;
  align-items: center;
  padding-top: 9px;
  font-size: 26.500px;
  line-height: 40px;
}
.tool span {
  margin-top: 16px;
}
.add {
  color: #d9560f;
}
.home-bar {
  position: absolute;
  left: 324px;
  bottom: 3px;
  width: 432px;
  height: 7px;
  border-radius: 4px;
  background: #bbbcbe;
}
```
